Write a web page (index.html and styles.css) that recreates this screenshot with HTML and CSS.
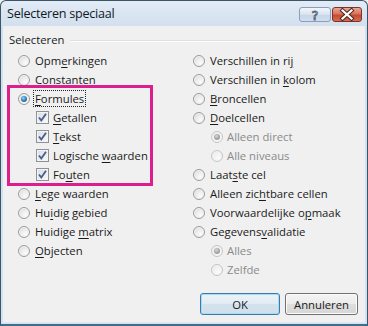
FILE: index.html
```html
<!DOCTYPE html>
<html>
<head>
<meta charset="utf-8">
<link rel="stylesheet" href="styles.css">
</head>
<body>
<div class="window">
  <div class="titlebar">
    <span class="title">Selecteren speciaal</span>
    <div class="caption">
      <div class="cbtn help">
        <svg width="32" height="15" viewBox="0 0 32 15"><text x="16" y="12.5" text-anchor="middle" class="qmark">?</text></svg>
      </div>
      <div class="cbtn close">
        <svg width="30" height="15" viewBox="0 0 30 15">
          <path d="M10.5 3.5 L19.5 11.5 M19.5 3.5 L10.5 11.5" stroke="#4a2a24" stroke-width="4.2" stroke-linecap="square"/>
          <path d="M10.5 3.5 L19.5 11.5 M19.5 3.5 L10.5 11.5" stroke="#ffffff" stroke-width="2.2" stroke-linecap="square"/>
        </svg>
      </div>
    </div>
  </div>
  <div class="client">
    <div class="group-head"><span class="glabel">Selecteren</span><span class="gline"></span></div>
    <div class="columns">
      <div class="col left">
        <div class="row"><span class="radio"></span><span>Opm<u>e</u>rkingen</span></div>
        <div class="row"><span class="radio"></span><span>Co<u>n</u>stanten</span></div>
        <div class="row"><span class="radio on"></span><span class="focus"><u>F</u>ormules</span></div>
        <div class="row sub"><span class="check"><svg width="13" height="13" viewBox="0 0 13 13"><path d="M3 6.5 L5.3 9.5 L10 2.8" fill="none" stroke="#4a5f8a" stroke-width="1.9"/></svg></span><span><u>G</u>etallen</span></div>
        <div class="row sub"><span class="check"><svg width="13" height="13" viewBox="0 0 13 13"><path d="M3 6.5 L5.3 9.5 L10 2.8" fill="none" stroke="#4a5f8a" stroke-width="1.9"/></svg></span><span><u>T</u>ekst</span></div>
        <div class="row sub"><span class="check"><svg width="13" height="13" viewBox="0 0 13 13"><path d="M3 6.5 L5.3 9.5 L10 2.8" fill="none" stroke="#4a5f8a" stroke-width="1.9"/></svg></span><span>Logische <u>w</u>aarden</span></div>
        <div class="row sub"><span class="check"><svg width="13" height="13" viewBox="0 0 13 13"><path d="M3 6.5 L5.3 9.5 L10 2.8" fill="none" stroke="#4a5f8a" stroke-width="1.9"/></svg></span><span>Fo<u>u</u>ten</span></div>
        <div class="row"><span class="radio"></span><span><u>L</u>ege waarden</span></div>
        <div class="row"><span class="radio"></span><span>Hu<u>i</u>dig gebied</span></div>
        <div class="row"><span class="radio"></span><span>Huidige <u>m</u>atrix</span></div>
        <div class="row"><span class="radio"></span><span><u>O</u>bjecten</span></div>
      </div>
      <div class="col right">
        <div class="row"><span class="radio"></span><span>Verschillen in ri<u>j</u></span></div>
        <div class="row"><span class="radio"></span><span>Verschillen in <u>k</u>olom</span></div>
        <div class="row"><span class="radio"></span><span><u>B</u>roncellen</span></div>
        <div class="row"><span class="radio"></span><span><u>D</u>oelcellen</span></div>
        <div class="row sub disabled"><span class="radio dis-on"></span><span>Alleen direct</span></div>
        <div class="row sub disabled"><span class="radio dis"></span><span>Alle niveaus</span></div>
        <div class="row"><span class="radio"></span><span>Laat<u>s</u>te cel</span></div>
        <div class="row"><span class="radio"></span><span>Alleen zic<u>h</u>tbare cellen</span></div>
        <div class="row"><span class="radio"></span><span>Voorwaardelijke o<u>p</u>maak</span></div>
        <div class="row"><span class="radio"></span><span>Gegevens<u>v</u>alidatie</span></div>
        <div class="row sub disabled"><span class="radio dis-on"></span><span>Alles</span></div>
        <div class="row sub disabled"><span class="radio dis"></span><span>Zelfde</span></div>
      </div>
    </div>
    <div class="buttons">
      <div class="btn default">OK</div>
      <div class="btn cancel">Annuleren</div>
    </div>
    <div class="highlight"></div>
  </div>
</div>
</body>
</html>
```
FILE: styles.css
```css
html, body {
  margin: 0;
  padding: 0;
  width: 368px;
  height: 326px;
  overflow: hidden;
  background: #f0f0f0;
}
.window {
  box-sizing: border-box;
  width: 368px;
  height: 326px;
  border: 1px solid #3a5468;
  border-bottom: 2px solid #3b6f8c;
  border-radius: 6px 6px 0 0;
  background: linear-gradient(#e2ebf6, #d2dfee 26px, #d4e1f0);
  display: flex;
  flex-direction: column;
  padding: 0 2px 1px 2px;
  font-family: "Open Sans", "Noto Sans", sans-serif;
  font-size: 11.3px;
  color: #1a1a1a;
}
.titlebar {
  height: 25px;
  display: flex;
  align-items: flex-start;
  justify-content: space-between;
  flex: none;
}
.title {
  font-size: 12.6px;
  letter-spacing: -0.25px;
  color: #111a24;
  padding-left: 4px;
  line-height: 26px;
}
.caption {
  display: flex;
  margin-top: 6px;
  margin-right: 3px;
}
.cbtn {
  box-sizing: border-box;
  height: 15px;
  border-radius: 3px;
  display: flex;
}
.help {
  width: 32px;
  border: 1px solid #8a9eb6;
  background: linear-gradient(#f0f5fa, #d9e4f0 50%, #c6d5e7 51%, #d0deee);
  margin-right: 1px;
}
.help svg { margin: -1px; }
.qmark {
  font-family: "DejaVu Sans", sans-serif;
  font-size: 13px;
  fill: #eef3f9;
  stroke: #5b6878;
  stroke-width: 0.9px;
}
.close {
  width: 30px;
  border: 1px solid #7b3427;
  background: linear-gradient(#eaa797, #d8735d 45%, #c54a30 55%, #d66c50);
}
.close svg { margin: -1px; }
.client {
  flex: 1;
  background: #f0f0f0;
  position: relative;
  display: flex;
  flex-direction: column;
  padding-top: 4px;
  border-bottom: 1px solid #dde8f4;
}
.group-head {
  height: 19px;
  display: flex;
  align-items: center;
  padding-left: 6px;
  padding-right: 5px;
}
.glabel {
  margin-right: 6px;
  color: #1a1a1a;
}
.gline {
  flex: 1;
  height: 0;
  border-top: 1px solid #dcdfe3;
  border-bottom: 1px solid #ffffff;
  margin-top: 2px;
}
.columns {
  display: flex;
  padding-top: 2px;
  padding-left: 15px;
}
.col.left { width: 175px; }
.col.right { flex: 1; }
.row {
  height: 19px;
  display: flex;
  align-items: center;
  gap: 5px;
  white-space: nowrap;
}
.row.sub { padding-left: 18px; gap: 4px; }
.row.disabled { color: #8a8a8a; }
.radio {
  box-sizing: border-box;
  width: 12px;
  height: 12px;
  border-radius: 50%;
  border: 1px solid #999c9f;
  background: radial-gradient(circle at 65% 70%, #fbfbfb 0, #ececec 45%, #cfd1d3 100%);
  box-shadow: inset 0 0 0 1px #f4f4f4;
  flex: none;
  position: relative;
}
.radio.on::after, .radio.dis-on::after {
  content: "";
  position: absolute;
  left: 2px;
  top: 2px;
  width: 6px;
  height: 6px;
  border-radius: 50%;
  background: radial-gradient(circle at 40% 35%, #9fd6f7 0, #3f8fc9 40%, #163e66 100%);
}
.radio.dis-on::after {
  background: radial-gradient(circle at 40% 35%, #d8d8d8 0, #a6a6a6 50%, #8a8a8a 100%);
}
.radio.dis, .radio.dis-on {
  border-color: #c4c6c8;
  background: radial-gradient(circle at 65% 70%, #fbfbfb 0, #f1f1f1 50%, #e0e1e2 100%);
}
.check {
  box-sizing: border-box;
  width: 13px;
  height: 13px;
  border: 1px solid #8f9194;
  background: linear-gradient(135deg, #d7dde5, #f8f9fb);
  box-shadow: inset 0 0 0 1px #f3f4f6;
  flex: none;
  display: flex;
}
.check svg { margin: -1px; }
u { text-decoration-thickness: 1px; text-underline-offset: 2px; }
.focus {
  outline: 1px dotted #222;
  outline-offset: 0px;
  padding: 0 1px;
  margin-left: -1px;
  line-height: 15px;
}
.buttons {
  display: flex;
  justify-content: flex-end;
  gap: 5px;
  padding-right: 7px;
  margin-top: 14px;
}
.btn {
  box-sizing: border-box;
  height: 22px;
  border-radius: 3px;
  display: flex;
  align-items: center;
  justify-content: center;
  color: #1a1a1a;
}
.btn.default {
  width: 80px;
  border: 1px solid #3d7bad;
  background: linear-gradient(#ebf3f8, #e1ecf3 50%, #d3e3ed 51%, #cfe0eb);
  box-shadow: inset 0 0 0 1px #a8daf5;
}
.btn.cancel {
  width: 73px;
  border: 1px solid #707070;
  background: linear-gradient(#f4f4f4, #ebebeb 50%, #dedede 51%, #d6d6d6);
  box-shadow: inset 0 0 0 1px #fcfcfc;
}
.highlight {
  position: absolute;
  left: 4px;
  top: 59px;
  width: 146px;
  height: 101px;
  box-sizing: border-box;
  border: 3px solid #dc1f8c;
  pointer-events: none;
}
```
